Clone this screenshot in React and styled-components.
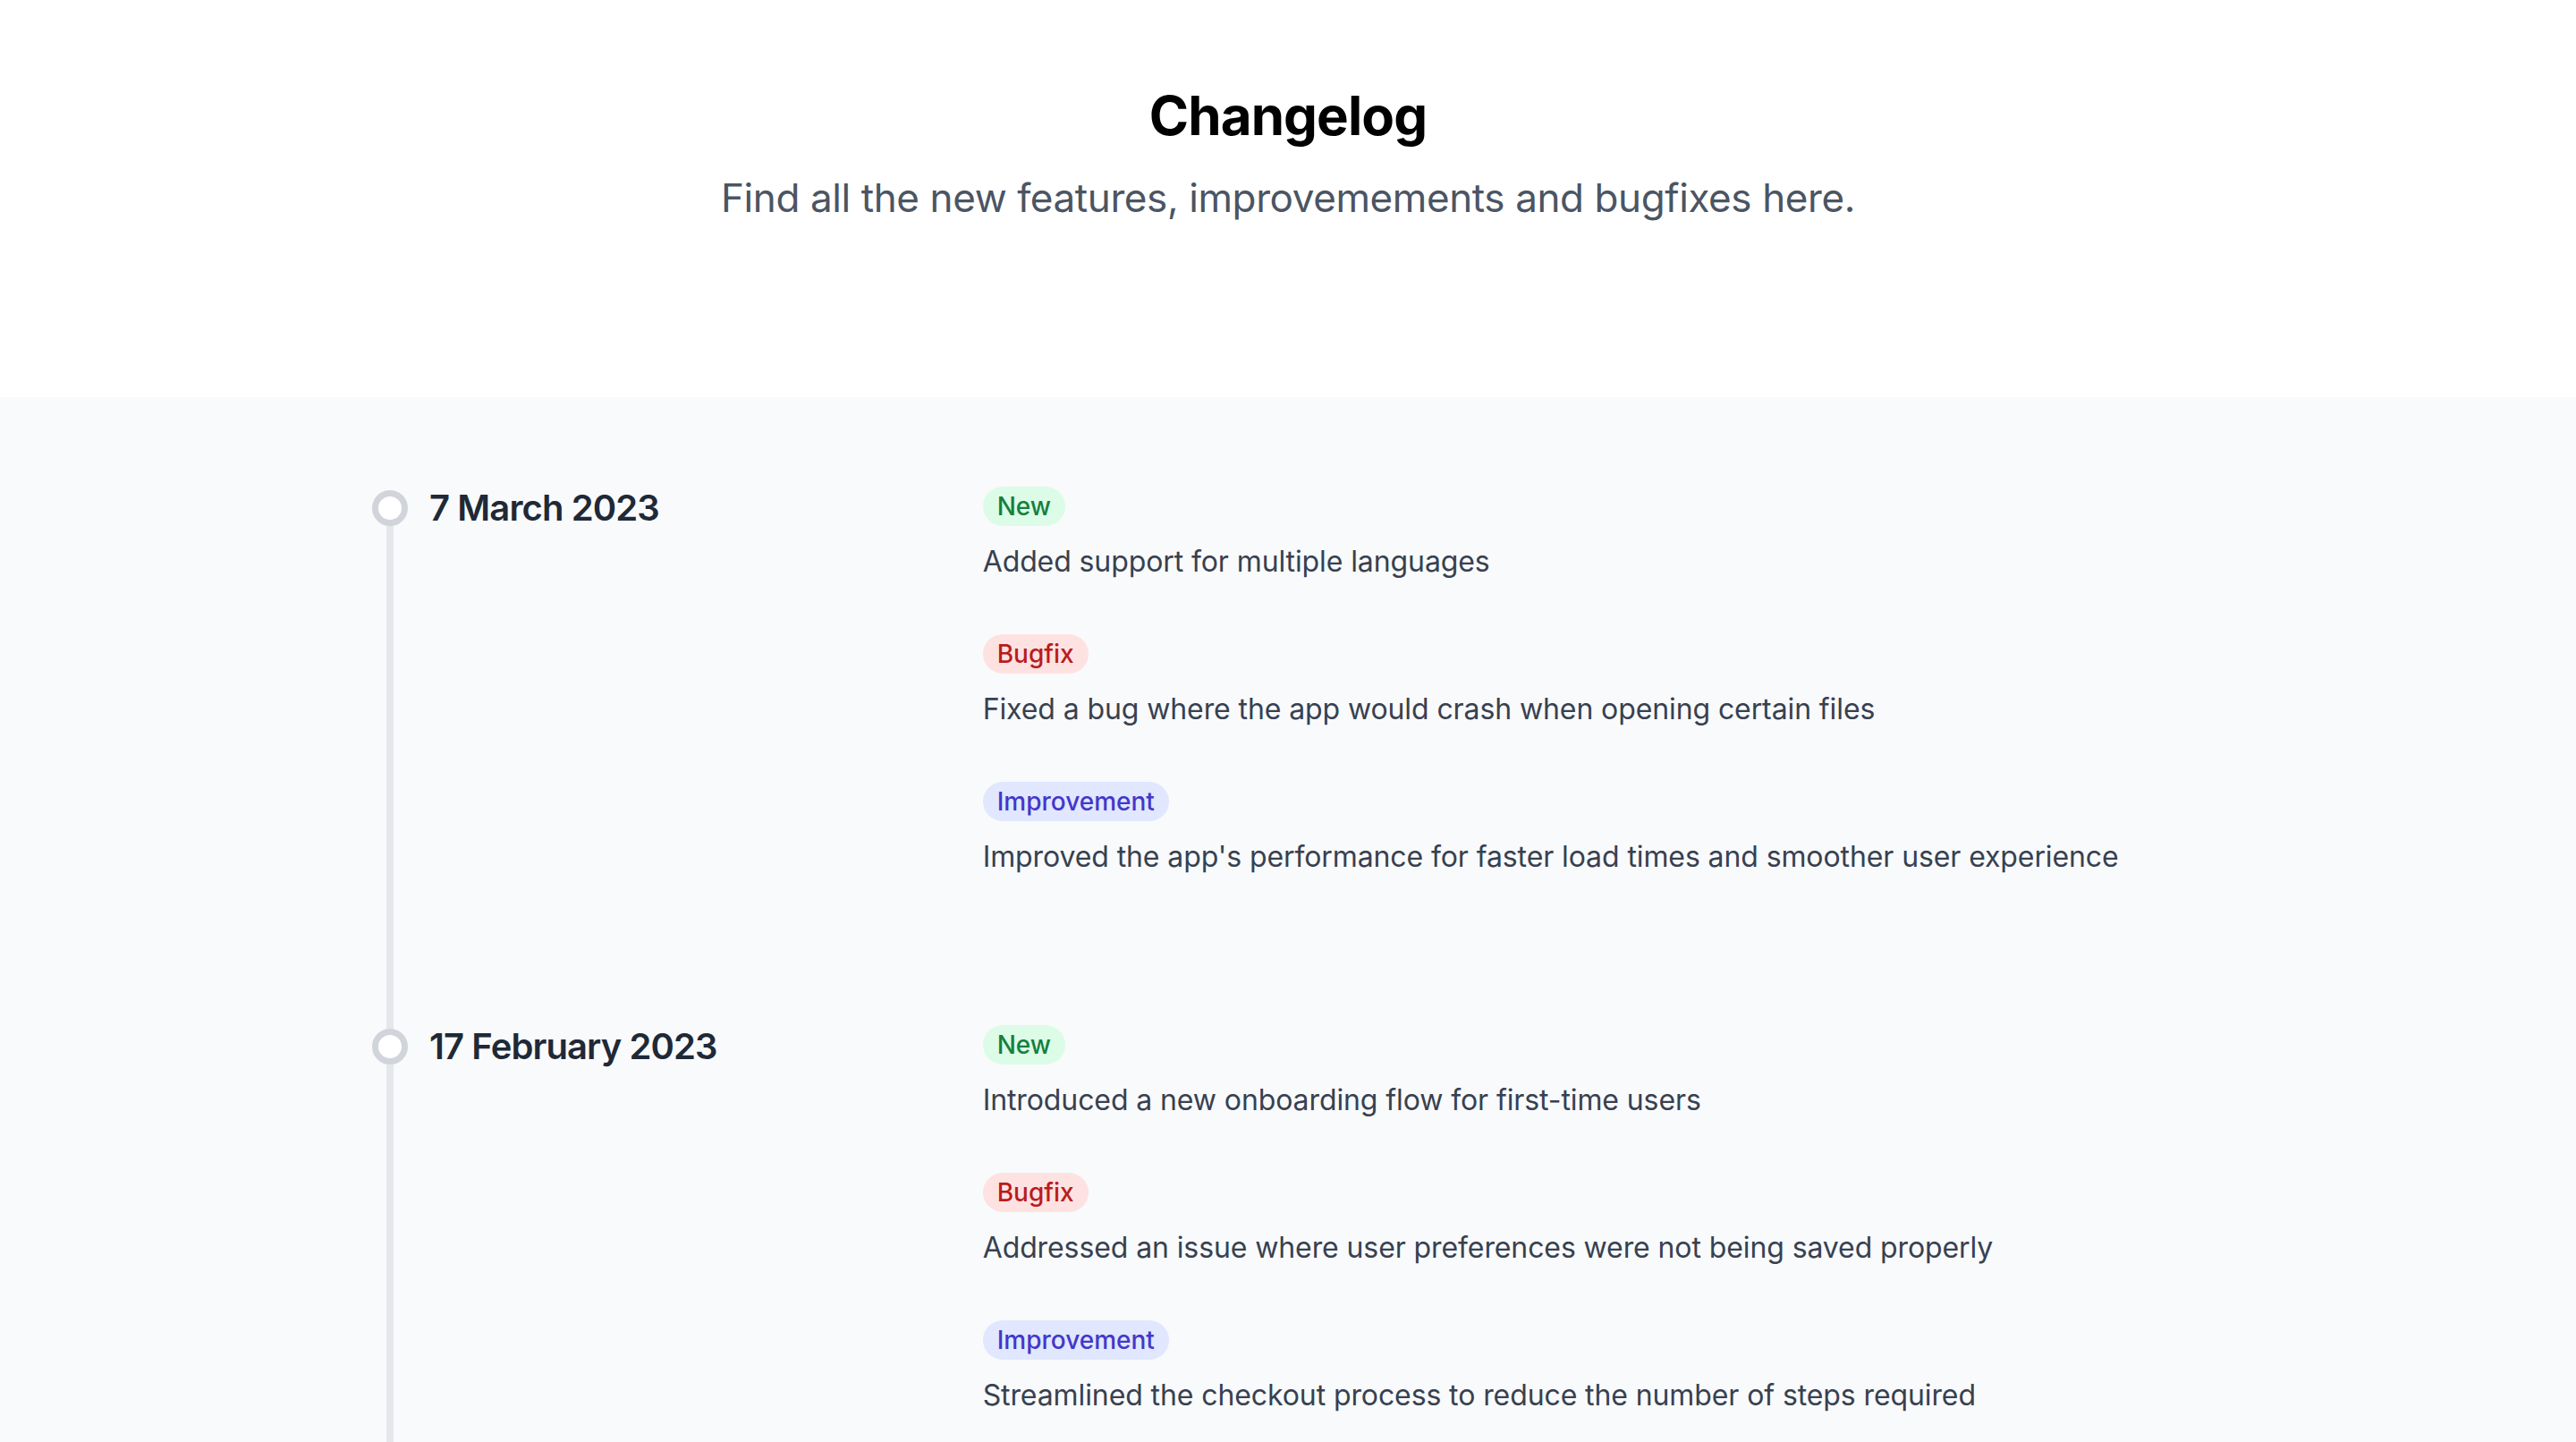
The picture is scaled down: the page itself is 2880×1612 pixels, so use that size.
import React from 'react';
import styled, { createGlobalStyle } from 'styled-components';

const GlobalStyle = createGlobalStyle`
  html, body {
    margin: 0;
    padding: 0;
    background: #f9fafb;
  }
  body {
    font-family: Inter, "Noto Sans", "Liberation Sans", sans-serif;
    -webkit-font-smoothing: antialiased;
  }
`;

const entries = [
  {
    date: '7 March 2023',
    items: [
      { type: 'new', text: 'Added support for multiple languages' },
      { type: 'bugfix', text: 'Fixed a bug where the app would crash when opening certain files' },
      { type: 'improvement', text: "Improved the app's performance for faster load times and smoother user experience" },
    ],
  },
  {
    date: '17 February 2023',
    items: [
      { type: 'new', text: 'Introduced a new onboarding flow for first-time users' },
      { type: 'bugfix', text: 'Addressed an issue where user preferences were not being saved properly' },
      { type: 'improvement', text: 'Streamlined the checkout process to reduce the number of steps required' },
    ],
  },
];

const badgeStyles = {
  new: { label: 'New', bg: '#dcfce7', color: '#15803d' },
  bugfix: { label: 'Bugfix', bg: '#fee2e2', color: '#b91c1c' },
  improvement: { label: 'Improvement', bg: '#e0e7ff', color: '#4338ca' },
};

export default function App() {
  return (
    <>
      <GlobalStyle />
      <Header>
        <Title>Changelog</Title>
        <Subtitle>Find all the new features, improvemements and bugfixes here.</Subtitle>
      </Header>

      <Section>
        <Container>
          {entries.map((entry, i) => (
            <Entry key={entry.date}>
              <DateCell>
                <Marker>
                  <LineTop $hidden={i === 0} />
                  <Dot />
                  <Line />
                </Marker>
                <DateText>{entry.date}</DateText>
              </DateCell>

              <Items>
                {entry.items.map((item) => {
                  const b = badgeStyles[item.type];
                  return (
                    <Item key={item.text}>
                      <Badge $bg={b.bg} $color={b.color}>{b.label}</Badge>
                      <Description>{item.text}</Description>
                    </Item>
                  );
                })}
              </Items>
            </Entry>
          ))}
        </Container>
      </Section>
    </>
  );
}

const Header = styled.header`
  background: #ffffff;
  text-align: center;
  padding: 93px 0 194px;
`;

const Title = styled.h1`
  margin: 0;
  font-size: 60px;
  line-height: 72px;
  font-weight: 700;
  color: #000;
  letter-spacing: -0.9px;
`;

const Subtitle = styled.p`
  margin: 27px 0 0;
  font-size: 44px;
  line-height: 58px;
  font-weight: 400;
  color: #4b5563;
  letter-spacing: -0.4px;
`;

const Section = styled.section`
  background: #f9fafb;
  padding-top: 100px;
  min-height: 1200px;
`;

const Container = styled.div`
  max-width: 2048px;
  margin: 0 auto;
`;

const Entry = styled.div`
  display: grid;
  grid-template-columns: 1fr 2fr;
  padding-bottom: 164px;
`;

const DateCell = styled.div`
  display: flex;
  gap: 24px;
`;

const Marker = styled.div`
  width: 40px;
  display: flex;
  flex-direction: column;
  align-items: center;
  margin-bottom: -164px;
`;

const LineTop = styled.div`
  width: 8px;
  height: 4px;
  background: ${(p) => (p.$hidden ? 'transparent' : '#e5e7eb')};
`;

const Dot = styled.div`
  box-sizing: border-box;
  width: 40px;
  height: 40px;
  border-radius: 50%;
  border: 7px solid #d1d5db;
  background: #ffffff;
  flex-shrink: 0;
`;

const Line = styled.div`
  width: 8px;
  flex: 1;
  background: #e5e7eb;
`;

const DateText = styled.h2`
  margin: 0;
  font-size: 40px;
  line-height: 48px;
  font-weight: 600;
  color: #1f2937;
  letter-spacing: -0.9px;
`;

const Items = styled.div`
  display: flex;
  flex-direction: column;
  gap: 57px;
`;

const Item = styled.div`
  display: flex;
  flex-direction: column;
  align-items: flex-start;
  gap: 16px;
`;

const Badge = styled.span`
  display: inline-flex;
  align-items: center;
  height: 44px;
  padding: 0 16px;
  border-radius: 22px;
  background: ${(p) => p.$bg};
  color: ${(p) => p.$color};
  font-size: 28px;
  font-weight: 500;
`;

const Description = styled.p`
  margin: 0;
  font-size: 32px;
  line-height: 48px;
  color: #374151;
  letter-spacing: -0.1px;
`;
